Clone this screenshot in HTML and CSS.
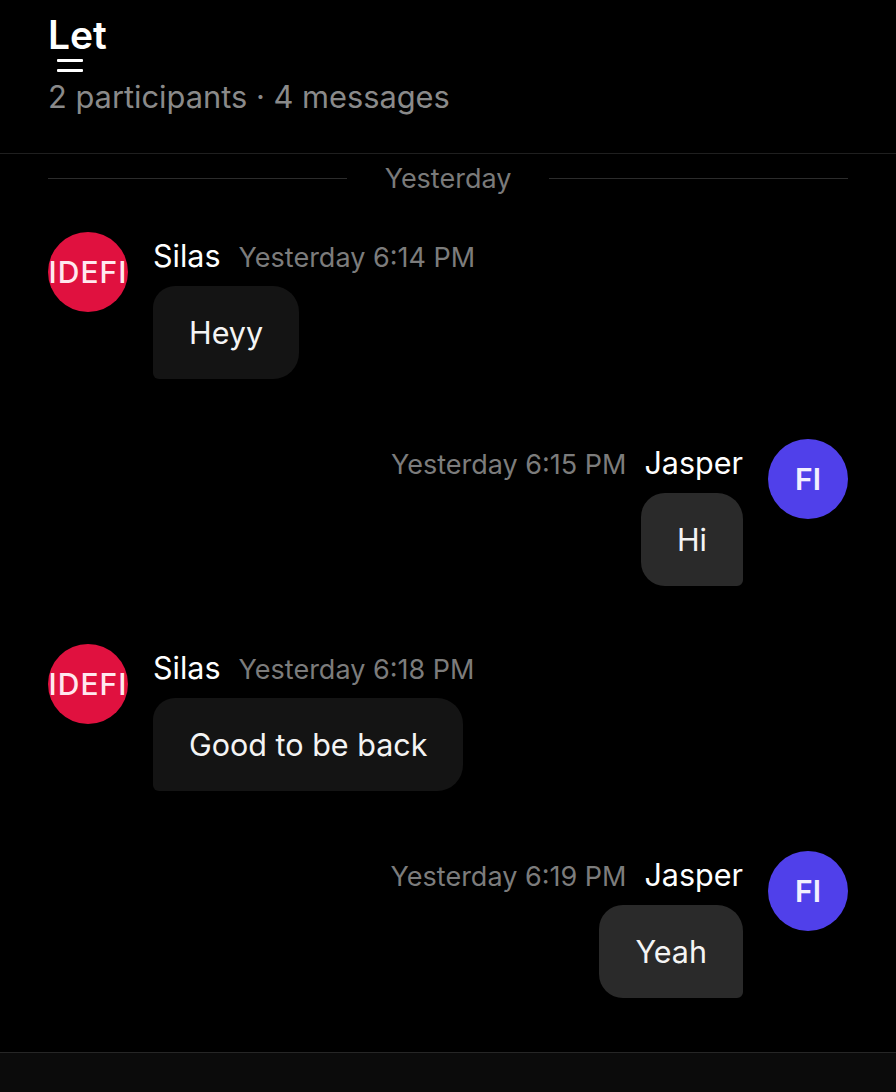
FILE: index.html
```html
<!DOCTYPE html>
<html lang="en">
<head>
<meta charset="utf-8">
<title>Let</title>
<link rel="stylesheet" href="styles.css">
</head>
<body>
<div class="page">
  <header class="header">
    <h1 class="title">Let</h1>
    <div class="menu-icon"><span></span><span></span></div>
    <div class="subtitle">2 participants · 4 messages</div>
  </header>
  <main class="messages">
    <div class="date-divider"><span class="line"></span><span class="date-text">Yesterday</span><span class="line"></span></div>

    <div class="msg msg-left">
      <div class="avatar avatar-red"><span>IDEFI</span></div>
      <div class="msg-body">
        <div class="msg-meta"><span class="name">Silas</span><span class="time">Yesterday 6:14 PM</span></div>
        <div class="bubble bubble-left">Heyy</div>
      </div>
    </div>

    <div class="msg msg-right">
      <div class="msg-body">
        <div class="msg-meta"><span class="time">Yesterday 6:15 PM</span><span class="name">Jasper</span></div>
        <div class="bubble bubble-right">Hi</div>
      </div>
      <div class="avatar avatar-purple"><span>FI</span></div>
    </div>

    <div class="msg msg-left">
      <div class="avatar avatar-red"><span>IDEFI</span></div>
      <div class="msg-body">
        <div class="msg-meta"><span class="name">Silas</span><span class="time">Yesterday 6:18 PM</span></div>
        <div class="bubble bubble-left">Good to be back</div>
      </div>
    </div>

    <div class="msg msg-right">
      <div class="msg-body">
        <div class="msg-meta"><span class="time">Yesterday 6:19 PM</span><span class="name">Jasper</span></div>
        <div class="bubble bubble-right">Yeah</div>
      </div>
      <div class="avatar avatar-purple"><span>FI</span></div>
    </div>
  </main>
  <footer class="footer"></footer>
</div>
</body>
</html>
```

FILE: styles.css
```css
* { box-sizing: border-box; }
html, body {
  margin: 0;
  padding: 0;
  background: #000;
}
body {
  font-family: Inter, "Noto Sans", "Liberation Sans", sans-serif;
  color: #fff;
}
.page {
  display: flex;
  flex-direction: column;
  height: 100vh;
  overflow: hidden;
}
.header {
  padding: 15px 48px 0;
  height: 154px;
  border-bottom: 1px solid #1f1f1f;
  flex: none;
}
.title {
  margin: 0;
  font-size: 39px;
  line-height: 40px;
  font-weight: 600;
}
.menu-icon {
  margin: 4px 0 0 9px;
  width: 26px;
  display: flex;
  flex-direction: column;
  gap: 7px;
}
.menu-icon span {
  display: block;
  height: 3px;
  background: #fff;
  border-radius: 1px;
}
.subtitle {
  margin-top: 7px;
  font-size: 30.8px;
  line-height: 36px;
  color: #8a8a8a;
}
.messages {
  flex: 1;
  min-height: 0;
  overflow: hidden;
  padding: 7px 48px 0;
  display: flex;
  flex-direction: column;
}
.date-divider {
  display: flex;
  align-items: center;
  gap: 38px;
  height: 34px;
  margin-bottom: 37px;
  flex: none;
}
.date-divider .line {
  flex: 1;
  height: 1px;
  background: #2c2c2c;
}
.date-text {
  font-size: 27px;
  color: #7a7a7a;
}
.msg {
  display: flex;
  align-items: flex-start;
  gap: 25px;
  flex: none;
}
.msg-left {
  margin-bottom: 60px;
}
.msg-right {
  justify-content: flex-end;
  margin-bottom: 58px;
}
.msg-body {
  display: flex;
  flex-direction: column;
  padding-top: 4px;
}
.msg-right .msg-body {
  align-items: flex-end;
}
.msg-left .msg-body {
  align-items: flex-start;
}
.msg-meta {
  display: flex;
  align-items: baseline;
  gap: 18px;
  height: 40px;
  line-height: 40px;
  margin-bottom: 10px;
}
.name {
  font-size: 30.5px;
  color: #fff;
}
.time {
  font-size: 27px;
  color: #7c7c7c;
}
.avatar {
  flex: none;
  width: 80px;
  height: 80px;
  border-radius: 50%;
  display: flex;
  align-items: center;
  justify-content: center;
  overflow: hidden;
  color: #fff;
}
.avatar span {
  white-space: nowrap;
}
.avatar-red {
  background: #e0113f;
}
.avatar-red span {
  font-size: 30px;
  font-weight: 500;
  color: #ffe8ee;
  letter-spacing: 1px;
}
.avatar-purple {
  background: #5040ea;
}
.avatar-purple span {
  font-size: 30px;
  font-weight: 600;
  color: #f2f0ff;
}
.bubble {
  font-size: 30.5px;
  line-height: 41px;
  padding: 26px 36px;
  color: #f4f4f4;
}
.bubble-left {
  background: #141414;
  border-radius: 22px 26px 26px 6px;
}
.bubble-right {
  background: #2a2a2a;
  border-radius: 24px 26px 6px 24px;
}
.footer {
  flex: none;
  height: 40px;
  border-top: 1px solid #262626;
  background: #0b0b0b;
}
```
